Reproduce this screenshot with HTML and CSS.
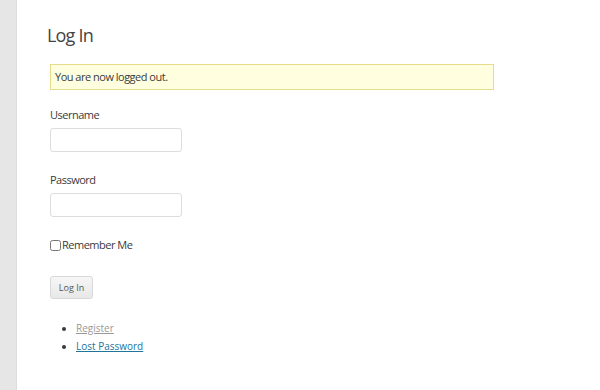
FILE: index.html
```html
<!DOCTYPE html>
<html lang="en">
<head>
    <meta charset="UTF-8">
    <meta name="viewport" content="width=device-width, initial-scale=1.0">
    <title>Log In</title>
    <link rel="stylesheet" href="styles.css">
</head>
<body>
    <div class="page">
        <div class="side-bar"></div>

        <div class="content">
            <h1 class="title">Log In</h1>

            <div class="notice">You are now logged out.</div>

            <form class="login-form" onsubmit="return false">
                <div class="field">
                    <label for="user-login">Username</label>
                    <input type="text" id="user-login" class="input">
                </div>
                <div class="field">
                    <label for="user-pass">Password</label>
                    <input type="password" id="user-pass" class="input">
                </div>
                <div class="remember">
                    <input type="checkbox" id="rememberme" class="check">
                    <label for="rememberme">Remember Me</label>
                </div>
                <button type="submit" class="submit-btn">Log In</button>
            </form>

            <ul class="links">
                <li><a href="#" class="link-register">Register</a></li>
                <li><a href="#" class="link-lost">Lost Password</a></li>
            </ul>
        </div>
    </div>
</body>
</html>
```

FILE: styles.css
```css
body {
    margin: 0;
    padding: 0;
    font-family: 'Open Sans', 'Liberation Sans', sans-serif;
    color: #3a3a3a;
    background-color: #ffffff;
}

.page {
    display: flex;
    min-height: 390px;
}

.side-bar {
    width: 16px;
    flex-shrink: 0;
    background-color: #e6e6e6;
    border-right: 1px solid #dcdcdc;
}

.content {
    padding: 22px 0 0 30px;
    width: 447px;
}

.title {
    margin: 0;
    font-size: 18px;
    font-weight: normal;
    letter-spacing: -0.8px;
    color: #444444;
    line-height: 26px;
}

.notice {
    margin: 16px 0 0 3px;
    padding: 0 4px;
    height: 24px;
    line-height: 24px;
    font-size: 11px;
    letter-spacing: -0.5px;
    background-color: #ffffe0;
    border: 1px solid #e6dc8c;
}

.login-form {
    margin: 17px 0 0 3px;
    font-size: 11px;
    letter-spacing: -0.5px;
}

.field {
    display: flex;
    flex-direction: column;
    margin-bottom: 20px;
}

.field label {
    line-height: 16px;
    margin-bottom: 5px;
}

.input {
    width: 132px;
    height: 24px;
    box-sizing: border-box;
    border: 1px solid #dddddd;
    border-radius: 3px;
    background: #ffffff;
}

.remember {
    display: flex;
    align-items: center;
    margin-top: 1px;
    height: 16px;
    line-height: 16px;
}

.check {
    margin: 0 1px 0 0;
    width: 11px;
    height: 11px;
}

.submit-btn {
    margin-top: 23px;
    width: 43px;
    height: 23px;
    padding: 0;
    font-family: 'Open Sans', 'Liberation Sans', sans-serif;
    font-size: 9px;
    letter-spacing: 0;
    color: #555555;
    background: linear-gradient(#f6f6f6, #e8e8e8);
    border: 1px solid #d8d8d8;
    border-radius: 3px;
}

.links {
    margin: 20px 0 0 0;
    padding-left: 29px;
    font-size: 10px;
    line-height: 18px;
}

.links a {
    text-decoration: underline;
}

.link-register {
    color: #999999;
}

.link-lost {
    color: #21759b;
}
```
